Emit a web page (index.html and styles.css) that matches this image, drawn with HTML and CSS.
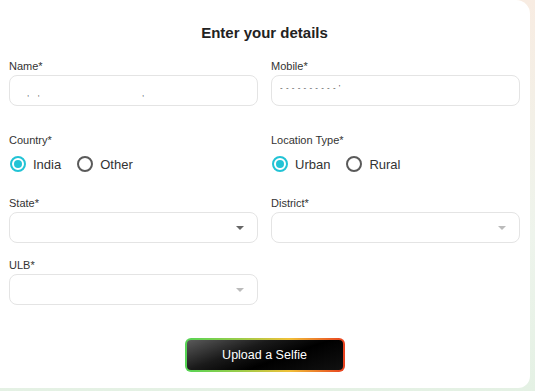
FILE: index.html
```html
<!DOCTYPE html>
<html>
<head>
  <meta charset="UTF-8">
  <title>Enter your details</title>
  <link rel="stylesheet" href="styles.css">
</head>
<body>
  <div class="card">
    <h2>Enter your details</h2>

    <div class="row row-first">
      <div class="field">
        <label for="name">Name*</label>
        <input type="text" id="name" class="input input-name" value=", ,                   ,">
      </div>
      <div class="field">
        <label for="mobile">Mobile*</label>
        <input type="text" id="mobile" class="input input-mobile" value="- - - - - - - - - - '">
      </div>
    </div>

    <div class="row row-radio">
      <div class="field">
        <label>Country*</label>
        <div class="radio-group">
          <span class="radio checked"></span><span class="radio-text">India</span>
          <span class="radio"></span><span class="radio-text">Other</span>
        </div>
      </div>
      <div class="field">
        <label>Location Type*</label>
        <div class="radio-group">
          <span class="radio checked"></span><span class="radio-text">Urban</span>
          <span class="radio"></span><span class="radio-text">Rural</span>
        </div>
      </div>
    </div>

    <div class="row row-select">
      <div class="field">
        <label>State*</label>
        <div class="input select"><span class="arrow dark"></span></div>
      </div>
      <div class="field">
        <label>District*</label>
        <div class="input select"><span class="arrow"></span></div>
      </div>
    </div>

    <div class="row">
      <div class="field">
        <label>ULB*</label>
        <div class="input select"><span class="arrow"></span></div>
      </div>
    </div>

    <div class="btn-group">
      <button class="btn-upload">Upload a Selfie</button>
    </div>
  </div>
</body>
</html>
```

FILE: styles.css
```css
body {
  margin: 0;
  width: 535px;
  height: 391px;
  overflow: hidden;
  font-family: "Liberation Sans", Arial, sans-serif;
  background: linear-gradient(to bottom, #f8ece2, #eef4ec 60%, #e4f1e4);
}
.card {
  width: 530px;
  height: 388px;
  box-sizing: border-box;
  background-color: white;
  border-radius: 0 14px 12px 0;
  padding: 23px 10px 0 9px;
}
h2 {
  margin: 0 0 16px 0;
  font-size: 15px;
  line-height: 20px;
  text-align: center;
  color: #222;
}
.row {
  display: grid;
  grid-template-columns: 249px 249px;
  column-gap: 13px;
}
.row-first {
  margin-bottom: 27px;
}
.row-radio {
  margin-bottom: 23px;
}
.row-select {
  margin-bottom: 15px;
}
label {
  display: block;
  font-size: 11px;
  line-height: 14px;
  color: #333;
  margin-bottom: 2px;
}
.input {
  display: block;
  width: 100%;
  height: 31px;
  box-sizing: border-box;
  border: 1px solid #e4e4e4;
  border-radius: 8px;
  background: white;
  outline: none;
}
.input-name {
  padding: 6px 0 0 17px;
  font-size: 8px;
  letter-spacing: 3px;
  color: #444;
}
.input-mobile {
  padding: 0 0 6px 8px;
  font-size: 8px;
  letter-spacing: 0.5px;
  color: #444;
}
.select {
  position: relative;
}
.arrow {
  position: absolute;
  right: 13px;
  top: 13px;
  width: 0;
  height: 0;
  border-left: 4px solid transparent;
  border-right: 4px solid transparent;
  border-top: 4px solid #bbb;
}
.arrow.dark {
  border-top-color: #666;
}
.radio-group {
  display: flex;
  align-items: center;
  height: 18px;
  margin-top: 8px;
}
.radio {
  width: 16px;
  height: 16px;
  box-sizing: border-box;
  border: 2px solid #5a5a5a;
  border-radius: 50%;
  margin-left: 1px;
  position: relative;
}
.radio.checked {
  border-color: #22c3d5;
}
.radio.checked::after {
  content: "";
  position: absolute;
  left: 2px;
  top: 2px;
  width: 8px;
  height: 8px;
  border-radius: 50%;
  background-color: #22c3d5;
}
.radio-text {
  font-size: 13px;
  color: #333;
  margin: 0 15px 0 7px;
}
.btn-group {
  display: flex;
  justify-content: center;
  margin-top: 33px;
}
.btn-upload {
  width: 160px;
  height: 34px;
  border: 2px solid transparent;
  border-radius: 6px;
  background:
    linear-gradient(160deg, #5a5a5a 0%, #1a1a1a 35%, #000 60%, #111 100%) padding-box,
    linear-gradient(90deg, #55d455 0%, #9ccc4a 35%, #f0c038 65%, #e8401f 100%) border-box;
  color: white;
  font-family: "Liberation Sans", Arial, sans-serif;
  font-size: 12.5px;
  cursor: pointer;
}
```
